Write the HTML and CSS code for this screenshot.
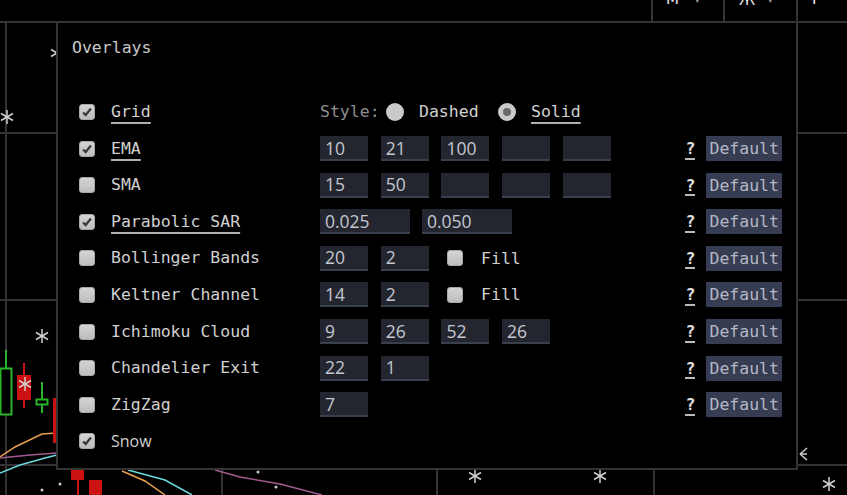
FILE: index.html
```html
<!DOCTYPE html>
<html lang="en">
<head>
    <meta charset="UTF-8">
    <title>Chart - Overlays</title>
    <meta name="viewport" content="width=device-width, initial-scale=1">
    <link rel="stylesheet" href="styles.css">
</head>
<body>
<div class="chart">
    <svg class="chart-canvas" width="847" height="495" viewBox="0 0 847 495">
        <!-- toolbar buttons along the top edge -->
        <g class="toolbar">
            <line x1="652" y1="0" x2="652" y2="22"/>
            <line x1="724" y1="0" x2="724" y2="22"/>
            <line x1="797" y1="0" x2="797" y2="22"/>
        </g>
        <g class="toolbar-text">
            <text x="666" y="4">M</text>
            <text x="695" y="3" class="small">▾</text>
            <text x="739" y="5">Ж</text>
            <text x="768" y="3" class="small">▾</text>
            <text x="812" y="4">P</text>
        </g>
        <!-- grid -->
        <g class="grid">
            <line x1="0" y1="22" x2="847" y2="22"/>
            <line x1="0" y1="133" x2="847" y2="133"/>
            <line x1="0" y1="300" x2="847" y2="300"/>
            <line x1="0" y1="465" x2="847" y2="465"/>
            <line x1="6" y1="22" x2="6" y2="495"/>
            <line x1="222" y1="22" x2="222" y2="495"/>
            <line x1="437" y1="22" x2="437" y2="495"/>
            <line x1="654" y1="22" x2="654" y2="495"/>
        </g>
        <!-- moving averages -->
        <polyline class="ma-orange" points="0,457 15,447 42,434 57,433"/>
        <polyline class="ma-pink" points="0,458 30,455 57,453"/>
        <polyline class="ma-cyan" points="0,473 20,465 45,458 57,455"/>
        <polyline class="ma-orange" points="122,471 145,481 165,495"/>
        <polyline class="ma-cyan" points="128,470 165,480 192,495"/>
        <polyline class="ma-pink" points="215,470 240,477 280,484 322,495"/>
        <!-- candles -->
        <line class="wick-up" x1="6" y1="350" x2="6" y2="368"/>
        <rect class="body-up" x="0.5" y="368.5" width="11" height="46"/>
        <line class="wick-down" x1="24" y1="363" x2="24" y2="408"/>
        <rect class="body-down" x="17" y="375" width="14" height="25"/>
        <line class="wick-up" x1="42" y1="382" x2="42" y2="413"/>
        <rect class="body-up" x="36.5" y="399.5" width="11" height="5"/>
        <rect class="body-down" x="53" y="398" width="8" height="45"/>
        <line class="wick-down" x1="78" y1="470" x2="78" y2="495"/>
        <rect class="body-down" x="71" y="470" width="13" height="10"/>
        <rect class="body-down" x="89" y="480" width="13" height="15"/>
        <!-- snow -->
        <g class="flake" transform="translate(7 117)"><line x1="0" y1="-7" x2="0" y2="7"/><line x1="-6" y1="-3.5" x2="6" y2="3.5"/><line x1="-6" y1="3.5" x2="6" y2="-3.5"/></g>
        <g class="flake" transform="translate(57 53)"><line x1="0" y1="-7" x2="0" y2="7"/><line x1="-6" y1="-3.5" x2="6" y2="3.5"/><line x1="-6" y1="3.5" x2="6" y2="-3.5"/></g>
        <g class="flake" transform="translate(42 336)"><line x1="0" y1="-7" x2="0" y2="7"/><line x1="-6" y1="-3.5" x2="6" y2="3.5"/><line x1="-6" y1="3.5" x2="6" y2="-3.5"/></g>
        <g class="flake" transform="translate(25 384)"><line x1="0" y1="-7" x2="0" y2="7"/><line x1="-6" y1="-3.5" x2="6" y2="3.5"/><line x1="-6" y1="3.5" x2="6" y2="-3.5"/></g>
        <g class="flake" transform="translate(475 476)"><line x1="0" y1="-7" x2="0" y2="7"/><line x1="-6" y1="-3.5" x2="6" y2="3.5"/><line x1="-6" y1="3.5" x2="6" y2="-3.5"/></g>
        <g class="flake" transform="translate(600 476)"><line x1="0" y1="-7" x2="0" y2="7"/><line x1="-6" y1="-3.5" x2="6" y2="3.5"/><line x1="-6" y1="3.5" x2="6" y2="-3.5"/></g>
        <g class="flake" transform="translate(829 484)"><line x1="0" y1="-7" x2="0" y2="7"/><line x1="-6" y1="-3.5" x2="6" y2="3.5"/><line x1="-6" y1="3.5" x2="6" y2="-3.5"/></g>
        <g class="flake" transform="translate(807 454)"><line x1="-7" y1="0" x2="0" y2="0"/><line x1="-7" y1="0" x2="0" y2="-6"/><line x1="-7" y1="0" x2="0" y2="6"/></g>
        <circle class="dot" cx="42" cy="490" r="1.5"/>
        <circle class="dot" cx="60" cy="484" r="1.5"/>
        <circle class="dot" cx="258" cy="472" r="1.5"/>
        <circle class="dot" cx="276" cy="487" r="1.5"/>
    </svg>
</div>

<div class="overlays">
    <div class="overlays-title">Overlays</div>
    <div class="overlay-list">
        <div class="overlay-row">
            <span class="check on"><svg viewBox="0 0 16 16"><path d="M3.5 8.5 L6.5 11.5 L12.5 4"/></svg></span>
            <span class="name active">Grid</span>
            <div class="params">
                <span class="muted">Style:</span>
                <span class="radio"></span>
                <span class="radio-label">Dashed</span>
                <span class="radio on"></span>
                <span class="radio-label active">Solid</span>
            </div>
            <div class="actions"></div>
        </div>
        <div class="overlay-row">
            <span class="check on"><svg viewBox="0 0 16 16"><path d="M3.5 8.5 L6.5 11.5 L12.5 4"/></svg></span>
            <span class="name active">EMA</span>
            <div class="params">
                <input class="num" value="10">
                <input class="num" value="21">
                <input class="num" value="100">
                <input class="num" value="">
                <input class="num" value="">
            </div>
            <div class="actions"><span class="help">?</span><button class="default">Default</button></div>
        </div>
        <div class="overlay-row">
            <span class="check"></span>
            <span class="name">SMA</span>
            <div class="params">
                <input class="num" value="15">
                <input class="num" value="50">
                <input class="num" value="">
                <input class="num" value="">
                <input class="num" value="">
            </div>
            <div class="actions"><span class="help">?</span><button class="default">Default</button></div>
        </div>
        <div class="overlay-row">
            <span class="check on"><svg viewBox="0 0 16 16"><path d="M3.5 8.5 L6.5 11.5 L12.5 4"/></svg></span>
            <span class="name active">Parabolic SAR</span>
            <div class="params wide">
                <input class="num long" value="0.025">
                <input class="num long" value="0.050">
            </div>
            <div class="actions"><span class="help">?</span><button class="default">Default</button></div>
        </div>
        <div class="overlay-row">
            <span class="check"></span>
            <span class="name">Bollinger Bands</span>
            <div class="params">
                <input class="num" value="20">
                <input class="num" value="2">
                <span class="check fill"></span>
                <span class="fill-label">Fill</span>
            </div>
            <div class="actions"><span class="help">?</span><button class="default">Default</button></div>
        </div>
        <div class="overlay-row">
            <span class="check"></span>
            <span class="name">Keltner Channel</span>
            <div class="params">
                <input class="num" value="14">
                <input class="num" value="2">
                <span class="check fill"></span>
                <span class="fill-label">Fill</span>
            </div>
            <div class="actions"><span class="help">?</span><button class="default">Default</button></div>
        </div>
        <div class="overlay-row">
            <span class="check"></span>
            <span class="name">Ichimoku Cloud</span>
            <div class="params">
                <input class="num" value="9">
                <input class="num" value="26">
                <input class="num" value="52">
                <input class="num" value="26">
            </div>
            <div class="actions"><span class="help">?</span><button class="default">Default</button></div>
        </div>
        <div class="overlay-row">
            <span class="check"></span>
            <span class="name">Chandelier Exit</span>
            <div class="params">
                <input class="num" value="22">
                <input class="num" value="1">
            </div>
            <div class="actions"><span class="help">?</span><button class="default">Default</button></div>
        </div>
        <div class="overlay-row">
            <span class="check"></span>
            <span class="name">ZigZag</span>
            <div class="params">
                <input class="num" value="7">
            </div>
            <div class="actions"><span class="help">?</span><button class="default">Default</button></div>
        </div>
        <div class="overlay-row">
            <span class="check on"><svg viewBox="0 0 16 16"><path d="M3.5 8.5 L6.5 11.5 L12.5 4"/></svg></span>
            <span class="name snow">Snow</span>
            <div class="params"></div>
            <div class="actions"></div>
        </div>
    </div>
</div>
</body>
</html>
```

FILE: styles.css
```css
body {
    margin: 0;
    background: #000;
    color: #d0d0d0;
    font-family: "DejaVu Sans Mono", "Liberation Mono", monospace;
    font-size: 16.5px;
    overflow: hidden;
}

/* chart behind the dialog */
.chart {
    position: absolute;
    left: 0;
    top: 0;
    width: 847px;
    height: 495px;
}
.chart-canvas {
    display: block;
}
.grid line, .toolbar line {
    stroke: #333;
    stroke-width: 2;
}
.toolbar-text text {
    fill: #e8e8e8;
    font-family: "DejaVu Sans", sans-serif;
    font-size: 15px;
}
.toolbar-text .small {
    font-size: 9px;
    fill: #999;
}
.ma-orange, .ma-pink, .ma-cyan {
    fill: none;
    stroke-width: 1.5;
}
.ma-orange { stroke: #e8a050; }
.ma-pink { stroke: #a05a90; }
.ma-cyan { stroke: #6ad8dc; }
.wick-up { stroke: #2bb32b; stroke-width: 2; }
.wick-down { stroke: #cc1515; stroke-width: 2; }
.body-up {
    fill: #000;
    stroke: #2bb32b;
    stroke-width: 2;
}
.body-down { fill: #cc1111; }
.flake line {
    stroke: #cfcfcf;
    stroke-width: 1.5;
}
.dot { fill: #ccc; }

/* overlays dialog */
.overlays {
    position: absolute;
    left: 56px;
    top: 21px;
    width: 742px;
    height: 449px;
    box-sizing: border-box;
    border: 2px solid #333;
    background: #000;
    padding: 15px 14px 0 14px;
}
.overlays-title {
    line-height: 20px;
    color: #c8c8c8;
}
.overlay-list {
    margin-top: 35.7px;
    padding-left: 7px;
    display: grid;
    grid-auto-rows: 36.6px;
}
.overlay-row {
    display: grid;
    grid-template-columns: 16px 193px 1fr auto;
    column-gap: 16px;
    align-items: center;
}
.name {
    white-space: nowrap;
    line-height: 20px;
}
.active {
    text-decoration: underline;
    text-decoration-thickness: 2px;
    text-underline-offset: 5px;
    text-decoration-color: #b0b0b0;
}
.name.snow {
    font-family: "Open Sans", sans-serif;
    font-size: 16px;
}

.check {
    display: block;
    width: 16px;
    height: 16px;
    box-sizing: border-box;
    border-radius: 3px;
    background: linear-gradient(#d4d4d4, #bdbdbd);
    border: 1px solid #a8a8a8;
}
.check svg {
    display: block;
    width: 14px;
    height: 14px;
}
.check path {
    fill: none;
    stroke: #3a3a3a;
    stroke-width: 2.6;
}

.params {
    display: flex;
    align-items: center;
    gap: 12.7px;
}
.params.wide {
    gap: 12px;
}
.num {
    width: 48px;
    height: 25px;
    box-sizing: border-box;
    margin: 0;
    padding: 0 0 0 5px;
    border: none;
    border-bottom: 2px solid #3a3f4e;
    background: #23262f;
    color: #c4c7cf;
    font-family: "Open Sans", sans-serif;
    font-size: 17.5px;
    line-height: 23px;
    outline: none;
}
.num.long {
    width: 90px;
}

.muted {
    color: #8e8e8e;
}
.radio {
    width: 18px;
    height: 18px;
    box-sizing: border-box;
    border-radius: 50%;
    background: #cacaca;
    margin-left: -6px;
}
.radio.on {
    border: 5px solid #cacaca;
    background: #6a6a6a;
    margin-left: 7px;
}
.radio-label {
    margin-left: 2px;
}
.check.fill {
    margin-left: 6px;
}
.fill-label {
    margin-left: 5px;
}

.actions {
    display: flex;
    align-items: center;
    gap: 11px;
}
.help {
    color: #e0e0e0;
    font-weight: bold;
    text-decoration: underline dashed;
    text-decoration-color: #bbb;
    text-underline-offset: 4px;
    text-decoration-thickness: 2px;
}
.default {
    height: 25px;
    padding: 0 3px;
    border: none;
    background: #363c52;
    color: #b4b8c6;
    font-family: "DejaVu Sans Mono", "Liberation Mono", monospace;
    font-size: 16.5px;
    cursor: pointer;
}
```
